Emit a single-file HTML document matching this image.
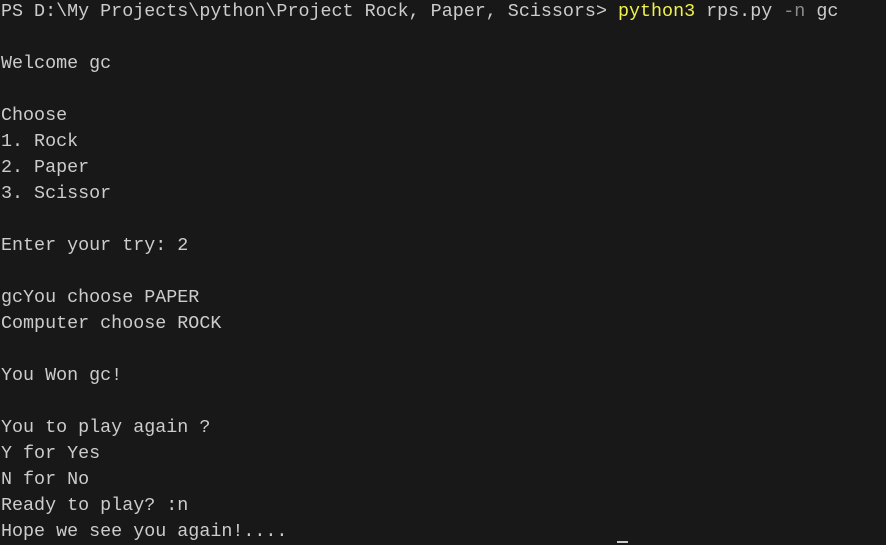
<!DOCTYPE html>
<html><head><style>
html,body{margin:0;padding:0;background:#181818;width:886px;height:543px;overflow:hidden}
pre{margin:0;position:absolute;left:1px;top:-1px;font-family:"Liberation Mono",monospace;font-size:18.36px;line-height:26px;color:#cccccc;white-space:pre}
.y{color:#f1f14c}.g{color:#8a8a8a}
.cur{position:absolute;left:617px;top:541px;width:11px;height:2px;background:#cccccc}
</style></head><body>
<pre>PS D:\My Projects\python\Project Rock, Paper, Scissors> <span class="y">python3</span> rps.py <span class="g">-n</span> gc

Welcome gc

Choose
1. Rock
2. Paper
3. Scissor

Enter your try: 2

gcYou choose PAPER
Computer choose ROCK

You Won gc!

You to play again ?
Y for Yes
N for No
Ready to play? :n
Hope we see you again!....</pre>
<div class="cur"></div>
</body></html>
